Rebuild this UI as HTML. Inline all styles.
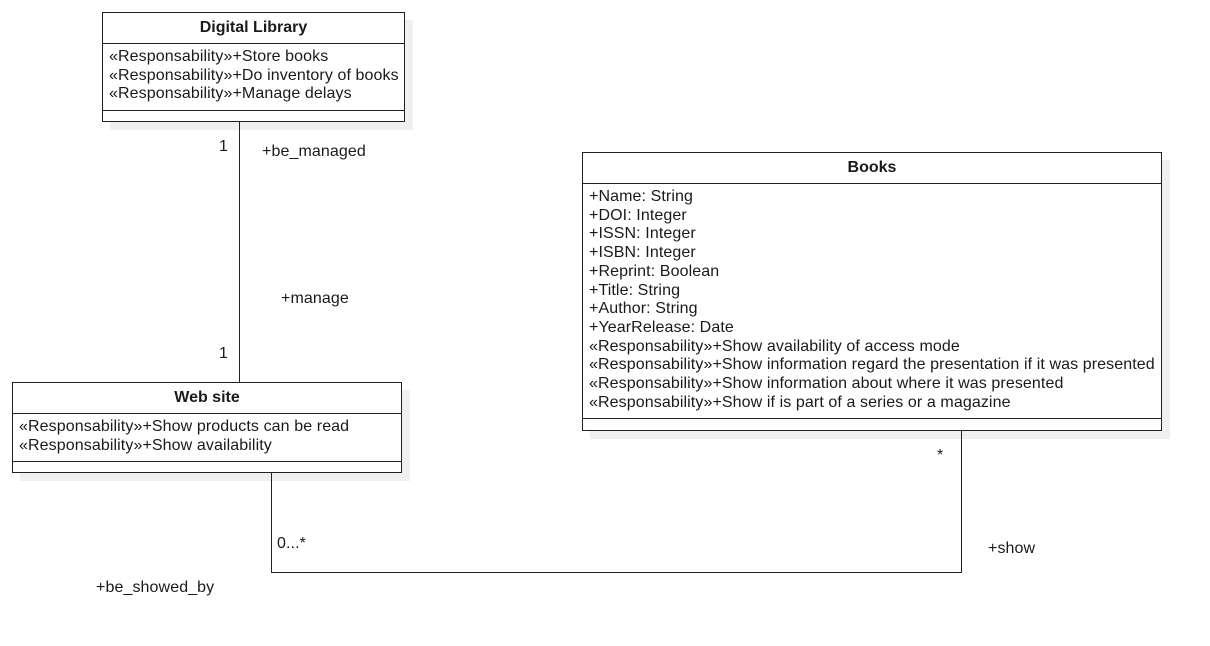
<!DOCTYPE html>
<html><head><style>
body{margin:0;width:1210px;height:646px;background:#fff;position:relative;overflow:hidden;font-family:"Liberation Sans",sans-serif;font-size:16px;color:#1a1a1a}
.a{position:absolute;white-space:nowrap;line-height:18.7px;letter-spacing:0.1px}
.box{position:absolute;border:1px solid #222;background:#fff;box-shadow:8px 8px 0 #f0f0f0;box-sizing:border-box}
.h{position:absolute;left:0;right:0;border-top:1px solid #222}
.t{position:absolute;left:0;right:0;text-align:center;font-weight:bold;line-height:18px}
.l{position:absolute;background:#222;z-index:2}
</style></head><body>

<div class="box" style="left:102px;top:12px;width:303px;height:110px">
<div class="t" style="top:6px">Digital Library</div>
<div class="h" style="top:30px"></div>
<div class="a" style="left:6px;top:35px">«Responsability»+Store books<br>«Responsability»+Do inventory of books<br>«Responsability»+Manage delays</div>
<div class="h" style="top:97px"></div>
</div>

<div class="box" style="left:582px;top:152px;width:580px;height:279px">
<div class="t" style="top:6px">Books</div>
<div class="h" style="top:30px"></div>
<div class="a" style="left:6px;top:35px">+Name: String<br>+DOI: Integer<br>+ISSN: Integer<br>+ISBN: Integer<br>+Reprint: Boolean<br>+Title: String<br>+Author: String<br>+YearRelease: Date<br>«Responsability»+Show availability of access mode<br>«Responsability»+Show information regard the presentation if it was presented<br>«Responsability»+Show information about where it was presented<br>«Responsability»+Show if is part of a series or a magazine</div>
<div class="h" style="top:265px"></div>
</div>

<div class="box" style="left:12px;top:382px;width:390px;height:91px">
<div class="t" style="top:6px">Web site</div>
<div class="h" style="top:30px"></div>
<div class="a" style="left:6px;top:35px">«Responsability»+Show products can be read<br>«Responsability»+Show availability</div>
<div class="h" style="top:78px"></div>
</div>

<div class="l" style="left:239px;top:121px;width:1px;height:261px"></div>
<div class="l" style="left:961px;top:430px;width:1px;height:143px"></div>
<div class="l" style="left:271px;top:572px;width:691px;height:1px"></div>
<div class="l" style="left:271px;top:472px;width:1px;height:101px"></div>

<div class="a" style="left:219px;top:138px">1</div>
<div class="a" style="left:262px;top:143px">+be_managed</div>
<div class="a" style="left:281px;top:290px">+manage</div>
<div class="a" style="left:219px;top:345px">1</div>
<div class="a" style="left:937px;top:447px">*</div>
<div class="a" style="left:277px;top:535px">0...*</div>
<div class="a" style="left:988px;top:540px">+show</div>
<div class="a" style="left:96px;top:579px">+be_showed_by</div>
</body></html>
